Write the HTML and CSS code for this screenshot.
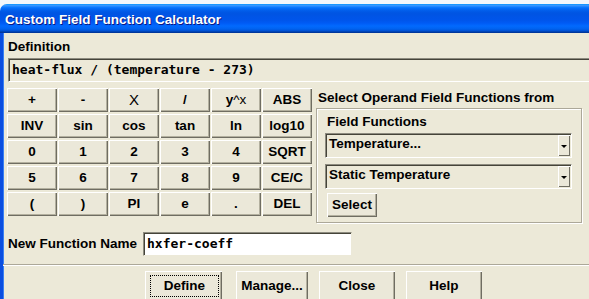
FILE: index.html
```html
<!DOCTYPE html>
<html>
<head>
<meta charset="utf-8">
<link rel="stylesheet" href="styles.css">
</head>
<body>
<div class="window">
  <div class="titlebar">Custom Field Function Calculator</div>
  <div class="client">
    <div class="label def-label">Definition</div>
    <div class="deffield">heat-flux / (temperature - 273)</div>
    <div class="middle">
      <div class="keypad">
        <button class="btn">+</button>
        <button class="btn">-</button>
        <button class="btn thin big">X</button>
        <button class="btn">/</button>
        <button class="btn">y<span class="thin">^x</span></button>
        <button class="btn">ABS</button>
        <button class="btn">INV</button>
        <button class="btn">sin</button>
        <button class="btn">cos</button>
        <button class="btn">tan</button>
        <button class="btn">ln</button>
        <button class="btn">log10</button>
        <button class="btn">0</button>
        <button class="btn">1</button>
        <button class="btn">2</button>
        <button class="btn">3</button>
        <button class="btn">4</button>
        <button class="btn">SQRT</button>
        <button class="btn">5</button>
        <button class="btn">6</button>
        <button class="btn">7</button>
        <button class="btn">8</button>
        <button class="btn">9</button>
        <button class="btn">CE/C</button>
        <button class="btn">(</button>
        <button class="btn">)</button>
        <button class="btn">PI</button>
        <button class="btn">e</button>
        <button class="btn">.</button>
        <button class="btn">DEL</button>
      </div>
      <div class="operand">
        <div class="label op-label">Select Operand Field Functions from</div>
        <div class="group">
          <div class="label ff-label">Field Functions</div>
          <div class="dropdown"><span class="dd-text">Temperature...</span><span class="dd-arrow"></span></div>
          <div class="dropdown"><span class="dd-text">Static Temperature</span><span class="dd-arrow"></span></div>
          <button class="btn select-btn">Select</button>
        </div>
      </div>
    </div>
    <div class="namerow">
      <span class="label">New Function Name</span>
      <div class="namefield">hxfer-coeff</div>
    </div>
    <div class="sep"></div>
    <div class="actions">
      <button class="btn act default"><span class="focus">Define</span></button>
      <button class="btn act manage">Manage...</button>
      <button class="btn act">Close</button>
      <button class="btn act">Help</button>
    </div>
  </div>
</div>
</body>
</html>
```

FILE: styles.css
```css
* { box-sizing: border-box; }
html, body {
  margin: 0;
  padding: 0;
  width: 589px;
  height: 299px;
  overflow: hidden;
  background: #f2f6fb;
}
.window {
  padding-top: 4px;
  height: 299px;
  display: flex;
  flex-direction: column;
}
.titlebar {
  height: 29px;
  flex: none;
  border-radius: 7px 0 0 0;
  background: linear-gradient(to bottom, #0997ff 0%, #3d95ff 6%, #127dff 10%, #036ffc 14%, #0262ee 20%, #0057e5 28%, #0054e3 34%, #0055eb 56%, #005bf5 66%, #026afe 76%, #0062ef 86%, #0052d6 92%, #0040ab 96%, #003092 100%);
  color: #fff;
  font-family: "Liberation Sans", Arial, sans-serif;
  font-weight: bold;
  font-size: 13.5px;
  line-height: 27px;
  padding: 2px 0 0 5px;
  text-shadow: 1px 1px 0 #0a1883;
}
.client {
  flex: 1;
  background: #ece9d8;
  border-left: 3px solid #0b4ee0;
  box-shadow: inset 1px 0 #3a80f3;
  padding: 6px 0 0 5px;
  font-family: "Liberation Sans", Arial, sans-serif;
  font-weight: bold;
  font-size: 13.5px;
  color: #000;
}
.label {
  line-height: 16px;
  white-space: nowrap;
}
.deffield {
  margin-top: 3px;
  height: 24px;
  border-top: 1px solid #8d8b7f;
  border-left: 1px solid #8d8b7f;
  border-bottom: 1px solid #fff;
  box-shadow: inset 1px 1px #454439;
  font-family: "DejaVu Sans Mono", monospace;
  font-weight: bold;
  font-size: 13px;
  line-height: 22px;
  padding-left: 3px;
  white-space: nowrap;
}
.middle {
  display: flex;
  margin-top: 6px;
  gap: 4px;
}
.keypad {
  margin-left: -1px;
  display: grid;
  grid-template-columns: repeat(6, 50px);
  grid-auto-rows: 24px;
  column-gap: 1px;
  row-gap: 2px;
}
.btn {
  font-family: "Liberation Sans", Arial, sans-serif;
  font-weight: bold;
  font-size: 13.5px;
  color: #000;
  background: #ebe8d9;
  border: none;
  padding: 0;
  margin: 0;
  box-shadow: inset 1px 1px #fff, inset -1px -1px #6f6d62, inset -2px -2px #b3b09f;
  line-height: 22px;
  text-align: center;
  white-space: nowrap;
}
.thin { font-weight: normal; }
.big { font-size: 15px; }
.operand {
  display: flex;
  flex-direction: column;
  width: 266px;
}
.op-label { padding-left: 2px; margin-top: 2px; }
.group {
  margin-top: 2px;
  height: 115px;
  border: 1px solid #aca899;
  box-shadow: inset 1px 1px #fff, 1px 1px #fff;
  padding: 5px 9px 0 8px;
  display: flex;
  flex-direction: column;
}
.ff-label { padding-left: 2px; }
.dropdown {
  margin-top: 3px;
  height: 25px;
  flex: none;
  display: flex;
  align-items: stretch;
  border-top: 1px solid #8d8b7f;
  border-left: 1px solid #8d8b7f;
  border-bottom: 1px solid #fff;
  border-right: 1px solid #fff;
  box-shadow: inset 1px 1px #454439;
}
.dropdown + .dropdown { margin-top: 6px; }
.dd-text {
  flex: 1;
  padding: 1px 0 0 3px;
  line-height: 18px;
}
.dd-arrow {
  flex: none;
  width: 12px;
  margin: 1px 1px 1px 0;
  background: #ebe8d9;
  box-shadow: inset 1px 1px #fff, inset -1px -1px #6f6d62;
  position: relative;
}
.dd-arrow::after {
  content: "";
  position: absolute;
  left: 3px;
  top: 10px;
  border-left: 3px solid transparent;
  border-right: 3px solid transparent;
  border-top: 3px solid #000;
}
.select-btn {
  margin-top: 4px;
  margin-left: 2px;
  width: 50px;
  height: 24px;
  flex: none;
  align-self: flex-start;
}
.namerow {
  margin-top: 9px;
  display: flex;
  align-items: center;
  gap: 6px;
}
.namefield {
  width: 209px;
  height: 24px;
  background: #fff;
  border-top: 1px solid #8d8b7f;
  border-left: 1px solid #8d8b7f;
  border-bottom: 1px solid #ece9d8;
  border-right: 1px solid #ece9d8;
  box-shadow: inset 1px 1px #454439;
  font-family: "DejaVu Sans Mono", monospace;
  font-weight: bold;
  font-size: 13px;
  line-height: 22px;
  padding-left: 3px;
}
.sep {
  margin: 8px 0 0 -5px;
  height: 2px;
  border-top: 1px solid #aca899;
  border-bottom: 1px solid #fff;
}
.actions {
  margin-top: 5px;
  display: flex;
  padding-left: 137px;
  gap: 11px;
}
.act {
  flex: none;
  width: 76px;
  height: 30px;
  line-height: 28px;
}
.default { width: 77px; padding: 4px 3px 4px 5px; margin-right: 3px; }
.manage { width: 72px; }
.focus {
  display: block;
  border: 1px dotted #000;
  line-height: 20px;
}
```
